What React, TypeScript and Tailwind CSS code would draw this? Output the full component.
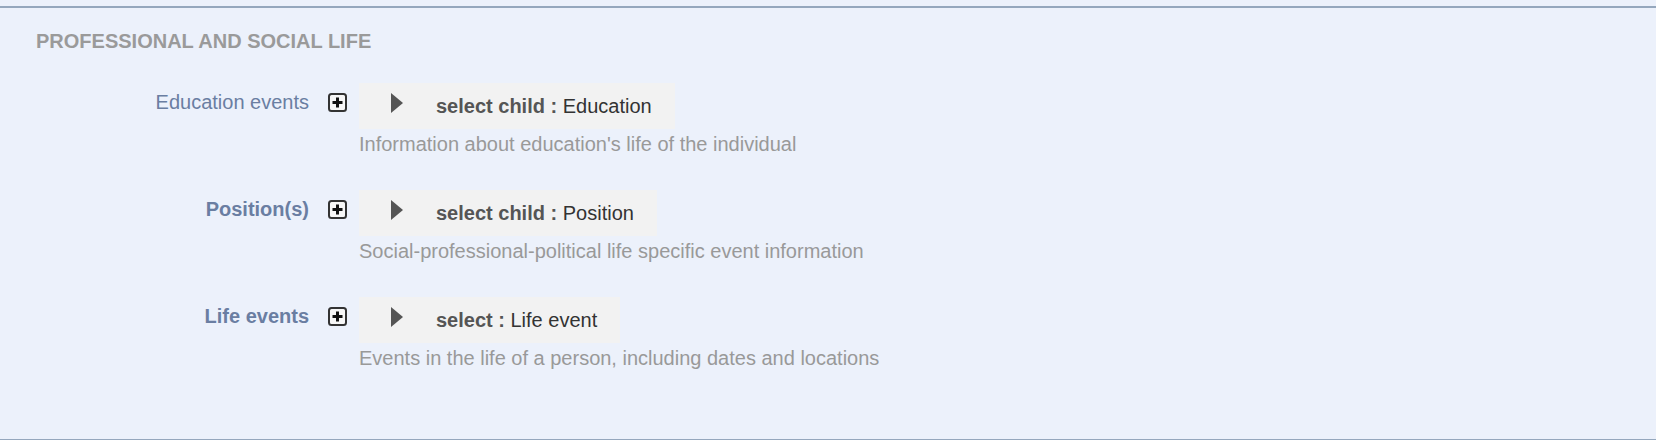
const FONT = "font-['Liberation_Sans',Arial,sans-serif]"

interface ChildField {
  label: string
  bold: boolean
  prefix: string
  target: string
  help: string
}

const FIELDS: ChildField[] = [
  {
    label: 'Education events',
    bold: false,
    prefix: 'select child :',
    target: 'Education',
    help: "Information about education's life of the individual",
  },
  {
    label: 'Position(s)',
    bold: true,
    prefix: 'select child :',
    target: 'Position',
    help: 'Social-professional-political life specific event information',
  },
  {
    label: 'Life events',
    bold: true,
    prefix: 'select :',
    target: 'Life event',
    help: 'Events in the life of a person, including dates and locations',
  },
]

function AddIcon() {
  return (
    <svg width="19" height="19" viewBox="0 0 19 19" className="flex-shrink-0">
      <rect x="1" y="1" width="17" height="17" rx="2.5" fill="#f7f7f7" stroke="#333" strokeWidth="2" />
      <rect x="4.5" y="8" width="10" height="3" fill="#111" />
      <rect x="8" y="4.5" width="3" height="10" fill="#111" />
    </svg>
  )
}

function Caret() {
  return (
    <svg width="12" height="20" viewBox="0 0 12 20" className="flex-shrink-0">
      <path d="M0 0 L12 10 L0 20 Z" fill="#555" />
    </svg>
  )
}

function FieldRow({ field }: { field: ChildField }) {
  return (
    <div className="flex items-start">
      <div className="w-[309px] flex-shrink-0 flex justify-end pt-[8px]">
        <span
          className={`text-[20px] leading-[23px] text-[#6a7ea2] ${field.bold ? 'font-bold' : 'font-normal'}`}
        >
          {field.label}
        </span>
      </div>
      <div className="ml-[19px] mt-[10px]">
        <AddIcon />
      </div>
      <div className="ml-[12px] flex flex-col">
        <div className="self-start h-[46px] bg-[#f2f2f2] flex items-start pl-[32px] pr-[23px]">
          <div className="mt-[10px]">
            <Caret />
          </div>
          <span className="ml-[33px] mt-[12px] text-[20px] leading-[23px] whitespace-nowrap">
            <span className="font-bold text-[#555]">{field.prefix}</span>{' '}
            <span className="text-[#333]">{field.target}</span>
          </span>
        </div>
        <p className="mt-[4px] text-[20px] leading-[23px] text-[#999] whitespace-nowrap">{field.help}</p>
      </div>
    </div>
  )
}

export default function App() {
  return (
    <div className={`${FONT} bg-[#ecf1fb] pt-[6px] h-[440px] overflow-hidden`}>
      <section className="h-[434px] border-t-2 border-b border-[#95a7bd] pl-[36px] pt-[22px]">
        <h2 className="text-[20px] leading-[23px] font-bold text-[#9a9a9a] uppercase">
          Professional and social life
        </h2>
        <div className="mt-[30px] -ml-[36px] flex flex-col gap-[34px]">
          {FIELDS.map((f) => (
            <FieldRow key={f.label} field={f} />
          ))}
        </div>
      </section>
    </div>
  )
}
